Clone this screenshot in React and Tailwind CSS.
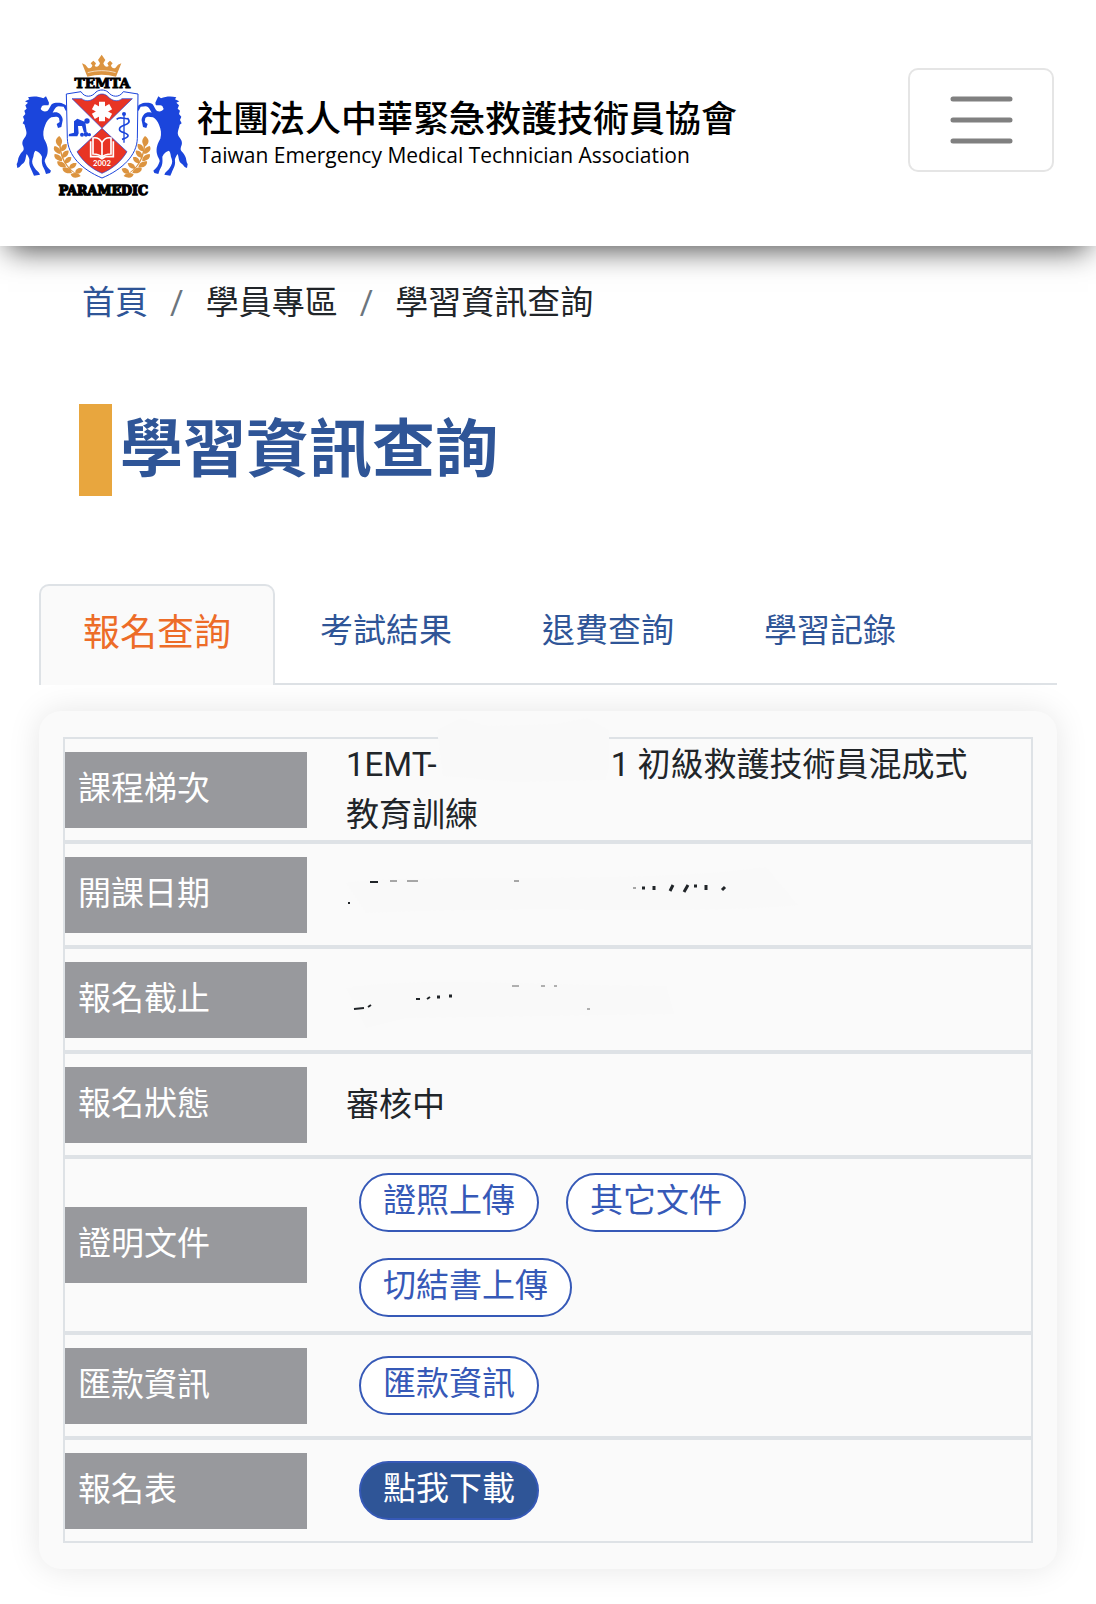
import React from 'react';

const tabs = ['報名查詢', '考試結果', '退費查詢', '學習記錄'];

const Horse = () => (
  <g fill="#1b45dc">
    <path d="M138 169 L143 179 L147 188 L146 194 C144 198 134 194 126 198 L122 207 C126 214 134 216 142 213 C148 208 150 200 155 193 C164 186 176 188 184 189 L197 195 L203 210 L197 212 L191 200 L176 199 C166 200 162 212 158 218 C166 216 174 216 180 222 C187 230 190 238 187 246 L184 261 L174 264 L170 252 L179 246 L177 234 C172 228 164 230 154 232 C146 236 140 244 136 254 C130 268 128 280 132 296 C140 310 146 324 142 342 C140 352 134 356 134 364 C138 376 142 384 153 392 L150 399 L138 402 L134 390 L128 378 C124 366 126 358 126 350 C122 340 114 334 106 332 C100 338 102 348 98 356 C94 366 98 374 104 384 C108 392 118 396 120 404 L102 407 L98 398 C94 388 86 376 88 364 C90 356 84 348 80 342 C76 352 78 362 70 370 C60 376 62 382 52 384 L50 372 C56 362 52 356 60 344 C66 332 74 334 70 320 C64 308 68 300 76 290 C84 278 76 268 74 254 L68 250 L73 240 L69 230 L76 222 L73 212 L80 206 L76 196 L84 188 L75 184 L88 178 L84 172 C102 168 116 170 130 175 Z" />
  </g>
);

const Laurel = () => (
  <g fill="#dc9440">
    <path d="M178 300 C174 345 196 390 240 408 C200 386 180 350 182 300 Z" />
    <path d="M178 320 C162 308 166 296 178 288 C190 300 188 310 178 320 Z" />
    <path d="M180 342 C162 338 158 326 164 318 C178 322 184 330 180 342 Z" />
    <path d="M186 364 C168 362 160 352 164 342 C180 344 188 352 186 364 Z" />
    <path d="M198 382 C180 386 170 374 172 364 C188 364 196 370 198 382 Z" />
    <path d="M216 398 C198 404 186 394 188 384 C202 380 212 386 216 398 Z" />
    <path d="M242 408 C226 418 214 412 212 402 C226 396 236 400 242 408 Z" />
    <path d="M184 334 C180 320 188 310 200 312 C202 324 196 332 184 334 Z" />
    <path d="M186 354 C184 340 194 330 206 332 C206 346 198 352 186 354 Z" />
    <path d="M194 370 C192 356 204 348 214 352 C214 364 206 370 194 370 Z" />
    <path d="M208 386 C206 374 218 366 230 370 C228 382 220 388 208 386 Z" />
    <path d="M226 400 C224 388 236 380 248 386 C246 398 236 404 226 400 Z" />
  </g>
);

const Emblem = () => (
  <svg viewBox="0 0 600 510" className="h-[170px] w-[200px] shrink-0" role="img" aria-label="TEMTA Paramedic">
    {/* crown */}
    <g fill="#dc9440">
      <path d="M262 110 L246 70 L256 74 L264 84 C272 86 276 82 277 76 L272 70 L280 62 L288 70 L284 78 C290 84 298 78 300 70 L294 60 L305 44 L316 60 L310 70 C312 78 320 84 326 78 L322 70 L330 62 L338 70 L333 76 C334 82 338 86 346 84 L354 74 L364 70 L348 110 C320 102 290 102 262 110 Z" />
    </g>
    <path d="M263 98 C290 90 320 90 347 98" fill="none" stroke="#fff" strokeWidth="2" />
    <text x="307" y="144" textAnchor="middle" fontSize="41" fontWeight="700" stroke="#000" strokeWidth="3" fontFamily="'DejaVu Serif', serif">TEMTA</text>

    <Horse />
    <g transform="translate(613 0) scale(-1 1)">
      <Horse />
    </g>
    <Laurel />
    <g transform="translate(613 0) scale(-1 1)">
      <Laurel />
    </g>

    {/* shield */}
    <path d="M199 162 L243 155 C254 174 276 172 288 156 C298 148 314 148 324 156 C336 172 358 174 370 155 L414 162 L412 296 C410 346 368 388 306 414 C244 388 204 346 202 296 Z" fill="#fff" stroke="#1b45dc" strokeWidth="3" />
    <path d="M216 176 L245 176 C258 186 276 184 290 168 C300 160 312 160 322 168 C336 184 354 186 366 176 L397 176 L306 265 Z" fill="#e83424" stroke="#1b45dc" strokeWidth="2" />
    <path d="M306 265 L381 335 C364 364 338 386 306 400 C274 386 248 364 231 335 Z" fill="#e83424" stroke="#1b45dc" strokeWidth="2" />
    <g stroke="#fff" strokeWidth="18">
      <path d="M306 185 V244 M280 200 L332 229 M332 200 L280 229" />
    </g>
    {/* first aider */}
    <g fill="#1b45dc">
      <circle cx="261" cy="243" r="8" />
      <path d="M222 244 L232 236 L256 246 L260 276 L252 278 L246 258 L234 258 L236 280 L232 289 L206 289 L207 282 L222 278 Z" />
      <circle cx="246" cy="284" r="6" />
      <circle cx="258" cy="283" r="7" />
      <circle cx="268" cy="284" r="5" />
    </g>
    {/* staff and snake */}
    <g fill="none" stroke="#1b45dc" strokeWidth="5">
      <path d="M372 226 V308" strokeWidth="4" />
      <path d="M350 238 C360 228 372 238 384 236 C392 246 384 252 372 256 C354 262 354 274 372 278 C390 284 388 292 366 298" />
    </g>
    <circle cx="372" cy="222" r="6" fill="#1b45dc" />
    {/* book */}
    <g fill="none" stroke="#fff" strokeWidth="5">
      <path d="M306 308 C298 294 288 292 279 294 V342 C290 342 300 344 306 352 C312 344 322 342 333 342 V294 C324 292 314 294 306 308 V352" />
      <path d="M272 304 V350 H296 L306 356 L316 350 H340 V304" />
    </g>
    <text x="306" y="378" textAnchor="middle" fontSize="23" fontWeight="700" fill="#fff" fontFamily="Lato, sans-serif">2002</text>
    <text x="310" y="464" textAnchor="middle" fontSize="38" fontWeight="700" stroke="#000" strokeWidth="4" fontFamily="'DejaVu Serif', serif">PARAMEDIC</text>
  </svg>
);

const Header = () => (
  <header className="relative flex items-center bg-white pt-10 pb-9 pr-[42px] shadow-[0_12px_28px_-8px_rgba(0,0,0,0.7)]">
    <a href="#" className="flex items-center text-black">
      <Emblem />
      <span className="-ml-[3px] block pt-5">
        <span className="block text-[36px] leading-[40px] font-medium">社團法人中華緊急救護技術員協會</span>
        <span className="block pl-0.5 font-['Open_Sans'] text-[21px] leading-[30px]">Taiwan Emergency Medical Technician Association</span>
      </span>
    </a>
    <button
      type="button"
      aria-label="選單"
      className="mt-7 ml-auto flex h-[104px] w-[146px] items-center justify-center self-start rounded-[10px] border-2 border-[#e5e5e5]"
    >
      <svg viewBox="0 0 63 48" className="h-12 w-[63px]" stroke="#808080" strokeWidth="5" strokeLinecap="round">
        <path d="M3 3H60M3 24H60M3 45H60" />
      </svg>
    </button>
  </header>
);

const Row = ({ label, children }) => (
  <tr>
    <th scope="row" className="h-[105px] w-[244px] border-y-2 border-l-2 border-[#dee2e6] p-0 text-left font-normal">
      <div className="bg-[#98999d] px-[13px] pt-3 pb-3.5 leading-[50px] text-white">{label}</div>
    </th>
    <td className="border-y-2 border-r-2 border-[#dee2e6] px-[39px] py-0 leading-[50px]">{children}</td>
  </tr>
);

const Pills = ({ children }) => <div className="-mr-1 flex flex-wrap gap-x-[27px] gap-y-[26px] px-[13px] py-3.5">{children}</div>;

const Pill = ({ solid, children }) => (
  <button
    type="button"
    className={`h-[59px] rounded-full border-2 border-[#3659b7] px-[22px] pb-1 leading-[50px] ${solid ? 'bg-[#2f5597] text-white' : 'bg-white text-[#3659b7]'}`}
  >
    {children}
  </button>
);

const App = () => {
  return (
    <div className="bg-white pb-9 font-[Roboto,'Noto_Sans_CJK_TC',sans-serif] text-[33px] text-[#212529]">
      <Header />

      <nav aria-label="breadcrumb" className="px-[82px] pt-8">
        <ol className="flex leading-[50px]">
          <li><a href="#" className="text-[#2f5597]">首頁</a></li>
          <li className="px-[22px] text-[#6c757d]">/</li>
          <li>學員專區</li>
          <li className="px-[22px] text-[#6c757d]">/</li>
          <li aria-current="page">學習資訊查詢</li>
        </ol>
      </nav>

      <h1 className="mx-[79px] mt-[76px] border-l-[33px] border-[#e8a63e] pl-2 text-[63px] leading-[92px] font-bold text-[#2f5597]">
        學習資訊查詢
      </h1>

      <main className="mx-[39px] mt-[88px]">
        <div role="tablist" className="flex border-b-2 border-[#dee2e6]">
          {tabs.map((tab, i) => (
            <button
              key={tab}
              type="button"
              role="tab"
              aria-selected={i === 0}
              className={
                i === 0
                  ? '-mb-0.5 h-[101px] rounded-t-[10px] border-2 border-b-0 border-[#dee2e6] bg-[#fafafa] px-[42px] pb-1 text-[37px] text-[#ed6c28]'
                  : 'px-[45px] pb-1.5 text-[#2f5597]'
              }
            >
              {tab}
            </button>
          ))}
        </div>

        <section className="mt-[26px] rounded-[22px] bg-[#fafafa] px-6 py-[26px] shadow-[0_0_33px_rgba(0,0,0,0.1)]">
          <table className="w-full border-separate border-spacing-0">
            <tbody>
              <Row label="課程梯次">
                1EMT-
                <span className="relative inline-block w-[174px]">
                  <svg viewBox="0 0 174 66" className="absolute -top-[58px] left-0 h-[66px] w-[174px]">
                    <path d="M0 12 L24 0 L50 8 L120 6 L150 0 L172 12 V48 L168 62 L80 64 L6 58 Z" fill="#f9f9f9" />
                  </svg>
                </span>
                1 初級救護技術員混成式
                <br />
                教育訓練
              </Row>
              <Row label="開課日期">
                <svg viewBox="0 -2 460 64" className="h-16 w-[460px] max-w-full" role="img" aria-label="已遮蔽">
                  <path d="M0 18 C60 8 300 20 420 2 L452 40 C340 50 180 40 20 48 Z" fill="#f9f9f9" />
                  <path d="M24 17H32M2 38H4" stroke="#212529" strokeWidth="2" />
                  <path d="M44 16H51M61 16H72M168 16H173M287 23H290" stroke="#555" strokeWidth="1" />
                  <path d="M296 23H299M308 21V25M324 26L327 20M338 27L342 20M348 21H351M360 20V25M376 25L379 22" stroke="#212529" strokeWidth="3" />
                </svg>
              </Row>
              <Row label="報名截止">
                <svg viewBox="0 -2 460 64" className="h-16 w-[460px] max-w-full" role="img" aria-label="已遮蔽">
                  <path d="M0 18 C80 6 200 16 320 16 L328 44 L60 48 L20 58 Z" fill="#f9f9f9" />
                  <path d="M8 39L18 38M22 37L25 35M70 29H74M81 29L84 27" stroke="#212529" strokeWidth="2" />
                  <path d="M91 27H94M103 26H106" stroke="#212529" strokeWidth="3" />
                  <path d="M166 16H173M195 16H199M208 16H211M241 39H244" stroke="#666" strokeWidth="1" />
                </svg>
              </Row>
              <Row label="報名狀態">審核中</Row>
              <Row label="證明文件">
                <Pills>
                  <Pill>證照上傳</Pill>
                  <Pill>其它文件</Pill>
                  <Pill>切結書上傳</Pill>
                </Pills>
              </Row>
              <Row label="匯款資訊">
                <Pills>
                  <Pill>匯款資訊</Pill>
                </Pills>
              </Row>
              <Row label="報名表">
                <Pills>
                  <Pill solid>點我下載</Pill>
                </Pills>
              </Row>
            </tbody>
          </table>
        </section>
      </main>
    </div>
  );
};

export default App;
